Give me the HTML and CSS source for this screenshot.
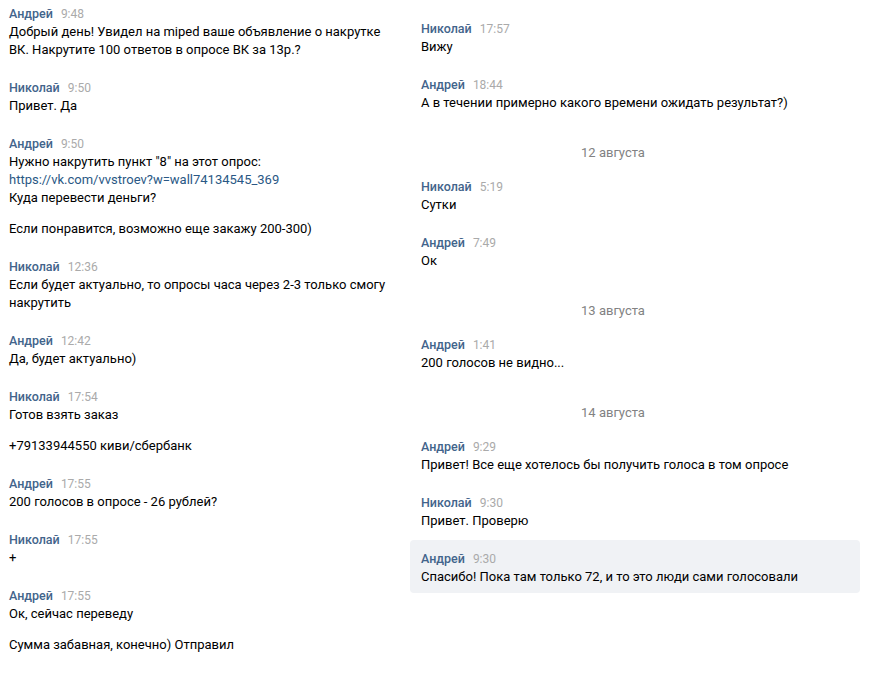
FILE: index.html
```html
<!DOCTYPE html>
<html lang="ru">
<head>
<meta charset="utf-8">
<title>Диалог</title>
<link rel="stylesheet" href="styles.css">
</head>
<body>
<div class="chat">
  <div class="col col-left">
    <div class="msg">
      <div class="head"><span class="name">Андрей</span><span class="time">9:48</span></div>
      <div class="text">Добрый день! Увидел на miped ваше объявление о накрутке ВК. Накрутите 100 ответов в опросе ВК за 13р.?</div>
    </div>
    <div class="msg">
      <div class="head"><span class="name">Николай</span><span class="time">9:50</span></div>
      <div class="text">Привет. Да</div>
    </div>
    <div class="msg">
      <div class="head"><span class="name">Андрей</span><span class="time">9:50</span></div>
      <div class="text">Нужно накрутить пункт "8" на этот опрос:<br><a class="link" href="#">https://vk.com/vvstroev?w=wall74134545_369</a><br>Куда перевести деньги?</div>
      <div class="text para">Если понравится, возможно еще закажу 200-300)</div>
    </div>
    <div class="msg">
      <div class="head"><span class="name">Николай</span><span class="time">12:36</span></div>
      <div class="text">Если будет актуально, то опросы часа через 2-3 только смогу накрутить</div>
    </div>
    <div class="msg">
      <div class="head"><span class="name">Андрей</span><span class="time">12:42</span></div>
      <div class="text">Да, будет актуально)</div>
    </div>
    <div class="msg">
      <div class="head"><span class="name">Николай</span><span class="time">17:54</span></div>
      <div class="text">Готов взять заказ</div>
      <div class="text para">+79133944550 киви/сбербанк</div>
    </div>
    <div class="msg">
      <div class="head"><span class="name">Андрей</span><span class="time">17:55</span></div>
      <div class="text">200 голосов в опросе - 26 рублей?</div>
    </div>
    <div class="msg">
      <div class="head"><span class="name">Николай</span><span class="time">17:55</span></div>
      <div class="text">+</div>
    </div>
    <div class="msg">
      <div class="head"><span class="name">Андрей</span><span class="time">17:55</span></div>
      <div class="text">Ок, сейчас переведу</div>
      <div class="text para">Сумма забавная, конечно) Отправил</div>
    </div>
  </div>
  <div class="col col-right">
    <div class="msg">
      <div class="head"><span class="name">Николай</span><span class="time">17:57</span></div>
      <div class="text">Вижу</div>
    </div>
    <div class="msg">
      <div class="head"><span class="name">Андрей</span><span class="time">18:44</span></div>
      <div class="text">А в течении примерно какого времени ожидать результат?)</div>
    </div>
    <div class="date">12 августа</div>
    <div class="msg">
      <div class="head"><span class="name">Николай</span><span class="time">5:19</span></div>
      <div class="text">Сутки</div>
    </div>
    <div class="msg">
      <div class="head"><span class="name">Андрей</span><span class="time">7:49</span></div>
      <div class="text">Ок</div>
    </div>
    <div class="date">13 августа</div>
    <div class="msg">
      <div class="head"><span class="name">Андрей</span><span class="time">1:41</span></div>
      <div class="text">200 голосов не видно...</div>
    </div>
    <div class="date">14 августа</div>
    <div class="msg">
      <div class="head"><span class="name">Андрей</span><span class="time">9:29</span></div>
      <div class="text">Привет! Все еще хотелось бы получить голоса в том опросе</div>
    </div>
    <div class="msg">
      <div class="head"><span class="name">Николай</span><span class="time">9:30</span></div>
      <div class="text">Привет. Проверю</div>
    </div>
    <div class="msg msg-selected">
      <div class="head"><span class="name">Андрей</span><span class="time">9:30</span></div>
      <div class="text">Спасибо! Пока там только 72, и то это люди сами голосовали</div>
    </div>
  </div>
</div>
</body>
</html>
```
FILE: styles.css
```css
html, body {
  margin: 0;
  padding: 0;
  background: #ffffff;
}

body {
  font-family: Roboto, "Open Sans", "DejaVu Sans", sans-serif;
  font-size: 13px;
  line-height: 18px;
  color: #000000;
  overflow: hidden;
}

.chat {
  display: flex;
  align-items: flex-start;
}

.col-left {
  width: 408px;
  margin-top: -5px;
}

.col-left .msg {
  padding-left: 9px;
  padding-right: 10px;
}

.col-right {
  width: 450px;
  margin-left: 2px;
  padding-top: 10px;
}

.col-right .msg {
  padding-left: 11px;
  padding-right: 11px;
}

.msg {
  padding-top: 10px;
  padding-bottom: 7px;
  margin-bottom: 3px;
  border-radius: 4px;
}

.msg-selected {
  background: #f0f2f5;
}

.head {
  display: flex;
  align-items: baseline;
  gap: 8px;
  height: 18px;
}

.name {
  font-weight: 500;
  font-size: 12.5px;
  color: #42648b;
}

.time {
  font-size: 12px;
  color: #aaaaaa;
}

.text {
  word-wrap: break-word;
}

.para {
  margin-top: 13px;
}

.link {
  color: #2a5885;
  text-decoration: none;
}

.date {
  padding: 22px 44px 6px 0;
  text-align: center;
  color: #828282;
  font-size: 13px;
  line-height: 18px;
}
```
